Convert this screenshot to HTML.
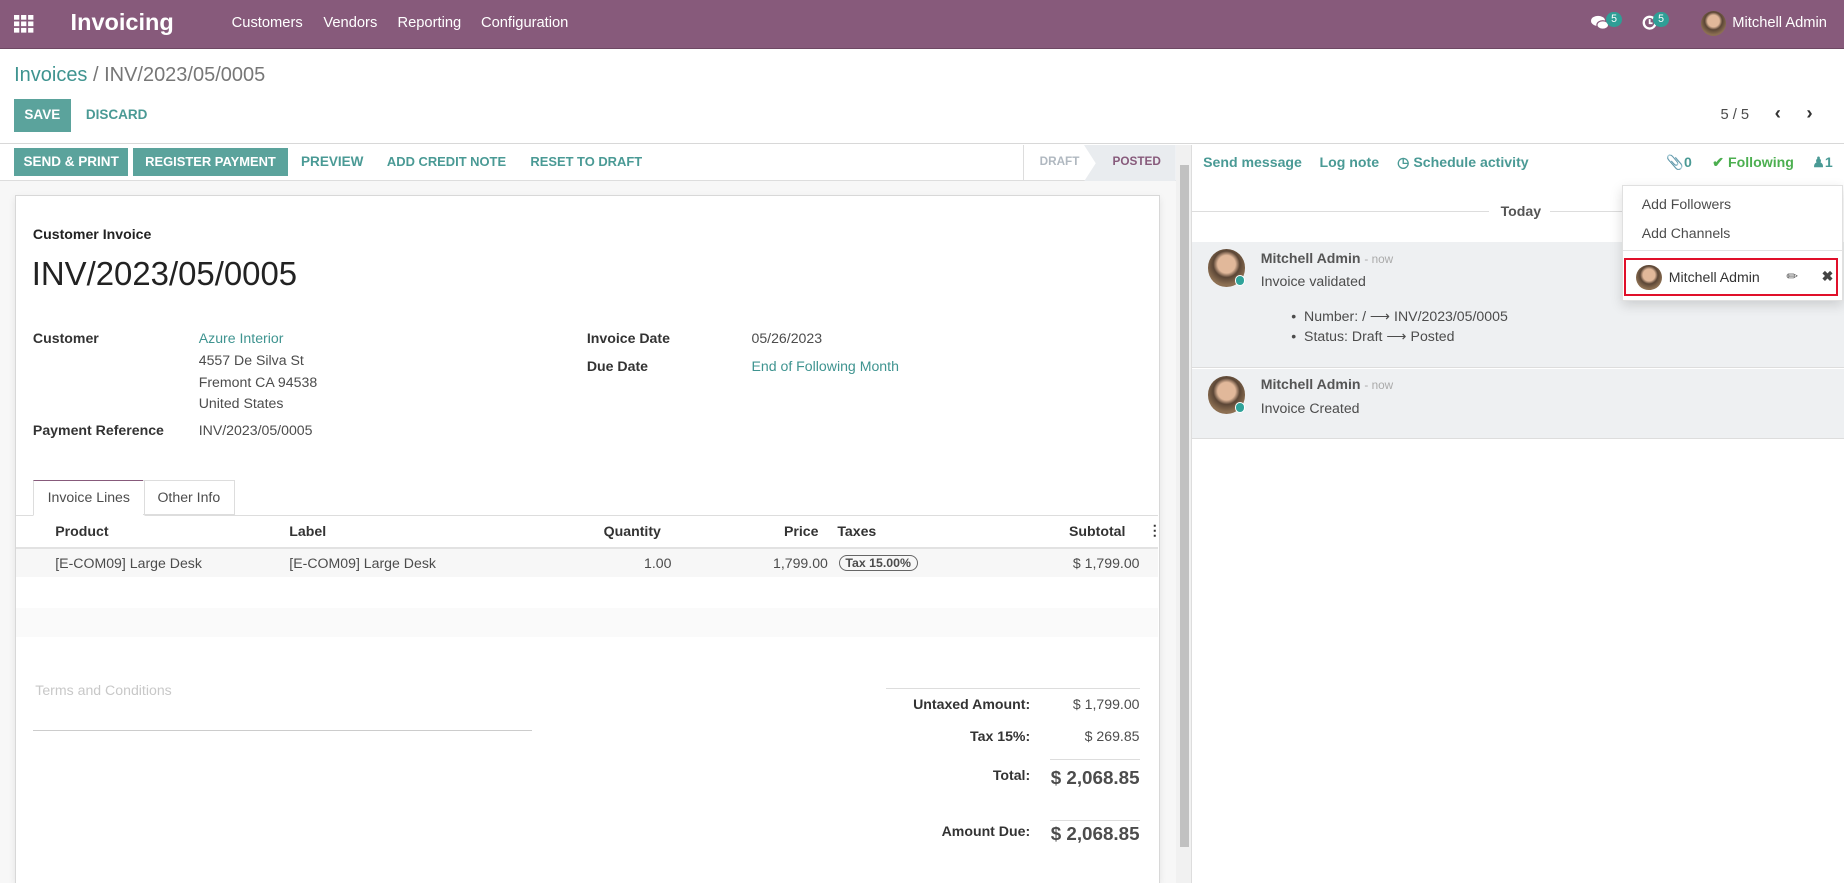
<!DOCTYPE html>
<html><head><meta charset="utf-8"><style>
html{zoom:1.17602;overflow:hidden}
*{box-sizing:border-box;margin:0;padding:0}
body{width:1568px;height:751px;overflow:hidden;font-family:"Liberation Sans",sans-serif;font-size:12px;color:#4c4c4c;background:#fff;position:relative}
.a{position:absolute;white-space:nowrap}
.nav{left:0;top:0;width:1568px;height:42px;background:#875a7b;border-bottom:1px solid #6e4863}
.w{color:#fff}
.teal{color:#3f9490}
.btn{background:#5ba39c;color:#fff;font-size:11.5px;font-weight:bold;text-align:center;line-height:24px}
.lnk{color:#4a9a95;font-weight:bold;font-size:11.5px}
.b{font-weight:bold;color:#333}
.badge{background:#2f9e96;color:#fff;font-size:9px;border-radius:8px;padding:0 4px;line-height:13px}
.av{border-radius:50%;background:radial-gradient(circle at 50% 40%,#e1b89a 0 30%,#5b4636 45%,#8c6f52 70%)}
.dot{width:9px;height:9px;border-radius:50%;background:#2fa39a;border:1.5px solid #fff}
.r{text-align:right}
</style></head><body>
<div class="a nav"></div>
<svg class="a" style="left:12px;top:13px" width="17" height="15" viewBox="0 0 17 15"><g fill="#fff"><rect x="0" y="0" width="4.5" height="4"/><rect x="6" y="0" width="4.5" height="4"/><rect x="12" y="0" width="4.5" height="4"/><rect x="0" y="5.5" width="4.5" height="4"/><rect x="6" y="5.5" width="4.5" height="4"/><rect x="12" y="5.5" width="4.5" height="4"/><rect x="0" y="11" width="4.5" height="4"/><rect x="6" y="11" width="4.5" height="4"/><rect x="12" y="11" width="4.5" height="4"/></g></svg>
<div class="a w" style="left:60px;top:8px;font-size:20px;font-weight:bold">Invoicing</div>
<div class="a w" style="left:197px;top:13px;font-size:12.5px">Customers</div>
<div class="a w" style="left:275px;top:13px;font-size:12.5px">Vendors</div>
<div class="a w" style="left:338px;top:13px;font-size:12.5px">Reporting</div>
<div class="a w" style="left:409px;top:13px;font-size:12.5px">Configuration</div>
<svg class="a" style="left:1353px;top:13px" width="16" height="14" viewBox="0 0 16 14"><ellipse cx="6" cy="5" rx="6" ry="4.3" fill="#fff"/><ellipse cx="10" cy="8.5" rx="5" ry="3.6" fill="#fff" stroke="#875a7b" stroke-width="1"/></svg>
<div class="a badge" style="left:1366px;top:10px">5</div>
<svg class="a" style="left:1396px;top:13px" width="13" height="13" viewBox="0 0 13 13"><circle cx="6.5" cy="6.5" r="5" fill="none" stroke="#fff" stroke-width="2"/><path d="M6.5 3.5V7H9" stroke="#fff" stroke-width="1.5" fill="none"/></svg>
<div class="a badge" style="left:1406px;top:10px">5</div>
<div class="a av" style="left:1446px;top:9px;width:22px;height:22px"></div>
<div class="a w" style="left:1473px;top:13px;font-size:12.5px">Mitchell Admin</div>

<div class="a" style="left:12px;top:54px;font-size:17px"><span class="teal">Invoices</span> <span style="color:#777">/ INV/2023/05/0005</span></div>
<div class="a btn" style="left:12px;top:84px;width:48px;height:28px;line-height:28px">SAVE</div>
<div class="a lnk" style="left:73px;top:91px">DISCARD</div>
<div class="a" style="left:1463px;top:91px;font-size:12.5px">5 / 5</div>
<div class="a b" style="left:1509px;top:87px;font-size:16px">&#8249;</div>
<div class="a b" style="left:1536px;top:87px;font-size:16px">&#8250;</div>

<div class="a" style="left:0;top:122px;width:1568px;border-top:1px solid #d8d8d8"></div>
<div class="a" style="left:0;top:123px;width:1000px;height:628px;background:#f7f7f7"></div>
<div class="a" style="left:0;top:123px;width:1000px;height:31px;background:#fff;border-bottom:1px solid #ddd"></div>
<div class="a btn" style="left:12px;top:126px;width:97px">SEND &amp; PRINT</div>
<div class="a btn" style="left:113px;top:126px;width:132px;font-size:11px">REGISTER PAYMENT</div>
<div class="a lnk" style="left:256px;top:131px">PREVIEW</div>
<div class="a lnk" style="left:329px;top:131px;font-size:11px">ADD CREDIT NOTE</div>
<div class="a lnk" style="left:451px;top:131px;font-size:11px">RESET TO DRAFT</div>
<div class="a" style="left:870px;top:123px;width:130px;height:31px;border-left:1px solid #ddd"></div>
<svg class="a" style="left:922px;top:123px" width="78" height="31"><polygon points="0,0 78,0 78,31 0,31 10,15.5" fill="#e9ecef"/></svg>
<div class="a" style="left:884px;top:132px;font-size:10px;font-weight:bold;color:#b0b8c0">DRAFT</div>
<div class="a" style="left:946px;top:132px;font-size:10px;font-weight:bold;color:#875a7b">POSTED</div>
<div class="a" style="left:1000px;top:123px;width:13px;height:628px;background:#f1f1f1"></div>
<div class="a" style="left:1003px;top:140px;width:8px;height:580px;background:#c1c1c1"></div>
<div class="a" style="left:1013px;top:123px;height:628px;border-left:1px solid #ddd"></div>

<div class="a" style="left:13px;top:166px;width:973px;height:585px;background:#fff;border:1px solid #d8d8d8;border-bottom:0;box-shadow:0 2px 6px rgba(0,0,0,.08)"></div>
<div class="a b" style="left:28px;top:192px;color:#222">Customer Invoice</div>
<div class="a" style="left:27px;top:217px;font-size:28px;color:#222">INV/2023/05/0005</div>
<div class="a b" style="left:28px;top:281px">Customer</div>
<div class="a teal" style="left:169px;top:281px">Azure Interior</div>
<div class="a" style="left:169px;top:299px">4557 De Silva St</div>
<div class="a" style="left:169px;top:318px">Fremont CA 94538</div>
<div class="a" style="left:169px;top:336px">United States</div>
<div class="a b" style="left:28px;top:359px">Payment Reference</div>
<div class="a" style="left:169px;top:359px">INV/2023/05/0005</div>
<div class="a b" style="left:499px;top:281px">Invoice Date</div>
<div class="a" style="left:639px;top:281px">05/26/2023</div>
<div class="a b" style="left:499px;top:304px">Due Date</div>
<div class="a teal" style="left:639px;top:304px">End of Following Month</div>

<div class="a" style="left:14px;top:438px;width:971px;border-top:1px solid #ddd"></div>
<div class="a" style="left:28px;top:408px;width:95px;height:31px;border:1px solid #ddd;border-bottom-color:#fff;border-top:1px solid #875a7b;background:#fff;text-align:center;line-height:28px">Invoice Lines</div>
<div class="a" style="left:122px;top:408px;width:78px;height:30px;border:1px solid #ddd;border-left:0;text-align:center;line-height:28px">Other Info</div>
<div class="a b" style="left:47px;top:445px">Product</div>
<div class="a b" style="left:246px;top:445px">Label</div>
<div class="a b r" style="left:462px;top:445px;width:100px">Quantity</div>
<div class="a b r" style="left:596px;top:445px;width:100px">Price</div>
<div class="a b" style="left:712px;top:445px">Taxes</div>
<div class="a b r" style="left:857px;top:445px;width:100px">Subtotal</div>
<div class="a b" style="left:976px;top:444px">&#8942;</div>
<div class="a" style="left:14px;top:465px;width:971px;height:2px;background:#e2e2e2"></div>
<div class="a" style="left:14px;top:467px;width:971px;height:24px;background:#f7f7f7"></div>
<div class="a" style="left:14px;top:517px;width:971px;height:25px;background:#fafafa"></div>
<div class="a" style="left:47px;top:472px">[E-COM09] Large Desk</div>
<div class="a" style="left:246px;top:472px">[E-COM09] Large Desk</div>
<div class="a r" style="left:471px;top:472px;width:100px">1.00</div>
<div class="a r" style="left:604px;top:472px;width:100px">1,799.00</div>
<div class="a" style="left:713px;top:472px;border:1.5px solid #666;border-radius:8px;padding:0 5px;font-size:10.5px;font-weight:bold;line-height:12px">Tax 15.00%</div>
<div class="a r" style="left:869px;top:472px;width:100px">$ 1,799.00</div>

<div class="a" style="left:30px;top:580px;color:#c8c8c8">Terms and Conditions</div>
<div class="a" style="left:28px;top:621px;width:424px;border-top:1px solid #ccc"></div>
<div class="a" style="left:753px;top:585px;width:216px;border-top:1px solid #ddd"></div>
<div class="a b r" style="left:746px;top:592px;width:130px">Untaxed Amount:</div>
<div class="a r" style="left:869px;top:592px;width:100px">$ 1,799.00</div>
<div class="a b r" style="left:746px;top:619px;width:130px">Tax 15%:</div>
<div class="a r" style="left:869px;top:619px;width:100px">$ 269.85</div>
<div class="a" style="left:893px;top:645px;width:76px;border-top:1px solid #ddd"></div>
<div class="a b r" style="left:746px;top:652px;width:130px">Total:</div>
<div class="a b r" style="left:849px;top:652px;width:120px;font-size:16px;color:#4c4c4c">$ 2,068.85</div>
<div class="a" style="left:893px;top:697px;width:76px;border-top:1px solid #ddd"></div>
<div class="a b r" style="left:746px;top:700px;width:130px">Amount Due:</div>
<div class="a b r" style="left:849px;top:700px;width:120px;font-size:16px;color:#4c4c4c">$ 2,068.85</div>

<div class="a lnk" style="left:1023px;top:131px;font-size:12px">Send message</div>
<div class="a lnk" style="left:1122px;top:131px;font-size:12px">Log note</div>
<div class="a lnk" style="left:1188px;top:131px;font-size:12px">&#9719; Schedule activity</div>
<div class="a lnk" style="left:1417px;top:131px;font-size:12px">&#128206;0</div>
<div class="a" style="left:1456px;top:131px;font-size:12px;font-weight:bold;color:#4caf50">&#10004; Following</div>
<div class="a lnk" style="left:1541px;top:131px;font-size:12px">&#9823;1</div>
<div class="a" style="left:1014px;top:179px;width:252px;border-top:1px solid #ddd"></div>
<div class="a b" style="left:1276px;top:173px;color:#555">Today</div>
<div class="a" style="left:1318px;top:179px;width:70px;border-top:1px solid #ddd"></div>
<div class="a" style="left:1014px;top:206px;width:554px;height:107px;background:#eef0f2;border-bottom:1px solid #ddd"></div>
<div class="a" style="left:1014px;top:314px;width:554px;height:59px;background:#eef0f2;border-bottom:1px solid #ddd"></div>
<div class="a av" style="left:1027px;top:212px;width:32px;height:32px"></div>
<div class="a dot" style="left:1050px;top:234px"></div>
<div class="a b" style="left:1072px;top:213px;color:#555">Mitchell Admin <span style="font-weight:normal;font-size:10px;color:#aaa">- now</span></div>
<div class="a" style="left:1072px;top:232px">Invoice validated</div>
<div class="a" style="left:1098px;top:262px">&#8226;&nbsp; Number: / &#10230; INV/2023/05/0005</div>
<div class="a" style="left:1098px;top:279px">&#8226;&nbsp; Status: Draft &#10230; Posted</div>
<div class="a av" style="left:1027px;top:320px;width:32px;height:32px"></div>
<div class="a dot" style="left:1050px;top:342px"></div>
<div class="a b" style="left:1072px;top:320px;color:#555">Mitchell Admin <span style="font-weight:normal;font-size:10px;color:#aaa">- now</span></div>
<div class="a" style="left:1072px;top:340px">Invoice Created</div>

<div class="a" style="left:1379px;top:157px;width:188px;height:99px;background:#fff;border:1px solid #e0e0e0;box-shadow:0 4px 10px rgba(0,0,0,.15)"></div>
<div class="a" style="left:1396px;top:167px">Add Followers</div>
<div class="a" style="left:1396px;top:191px">Add Channels</div>
<div class="a" style="left:1380px;top:213px;width:186px;border-top:1px solid #e3e3e3"></div>
<div class="a" style="left:1381px;top:219px;width:182px;height:33px;border:2px solid #e0102a"></div>
<div class="a av" style="left:1391px;top:225px;width:22px;height:22px"></div>
<div class="a" style="left:1419px;top:229px;color:#333">Mitchell Admin</div>
<div class="a" style="left:1519px;top:228px;color:#555">&#9999;</div>
<div class="a" style="left:1549px;top:228px;color:#444;font-weight:bold">&#10006;</div>
</body></html>
